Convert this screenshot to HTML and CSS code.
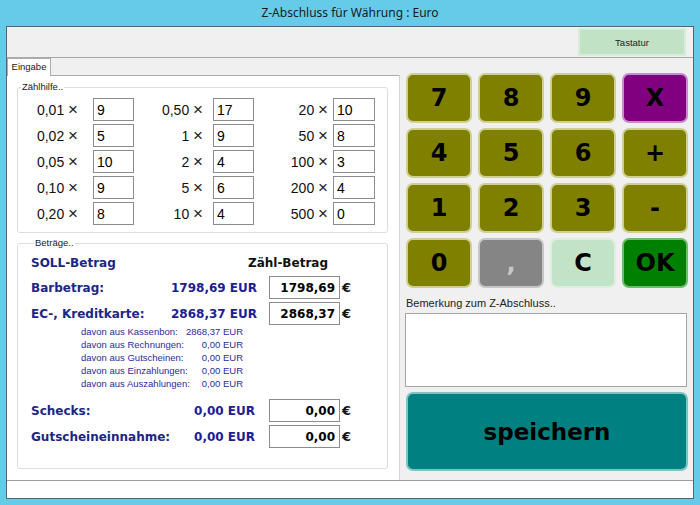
FILE: index.html
```html
<!DOCTYPE html>
<html lang="de">
<head>
<meta charset="utf-8">
<title>Z-Abschluss</title>
<link rel="stylesheet" href="styles.css">
</head>
<body>
<div class="window">
  <div class="titlebar">Z-Abschluss für Währung : Euro</div>
  <div class="client">
    <div class="topband"><button class="tastatur">Tastatur</button></div>
    <div class="main">
      <div class="tabs">
        <div class="tabstrip"><div class="tab">Eingabe</div></div>
        <div class="tabpage">
          <fieldset class="group count">
            <legend>Zählhilfe..</legend>
            <div class="countgrid">
              <span class="lbl l1">0,01 <span class="x">×</span></span><input class="cin" value="9">
              <span class="lbl l2">0,50 <span class="x">×</span></span><input class="cin" value="17">
              <span class="lbl l3">20 <span class="x">×</span></span><input class="cin" value="10">
              <span class="lbl l1">0,02 <span class="x">×</span></span><input class="cin" value="5">
              <span class="lbl l2">1 <span class="x">×</span></span><input class="cin" value="9">
              <span class="lbl l3">50 <span class="x">×</span></span><input class="cin" value="8">
              <span class="lbl l1">0,05 <span class="x">×</span></span><input class="cin" value="10">
              <span class="lbl l2">2 <span class="x">×</span></span><input class="cin" value="4">
              <span class="lbl l3">100 <span class="x">×</span></span><input class="cin" value="3">
              <span class="lbl l1">0,10 <span class="x">×</span></span><input class="cin" value="9">
              <span class="lbl l2">5 <span class="x">×</span></span><input class="cin" value="6">
              <span class="lbl l3">200 <span class="x">×</span></span><input class="cin" value="4">
              <span class="lbl l1">0,20 <span class="x">×</span></span><input class="cin" value="8">
              <span class="lbl l2">10 <span class="x">×</span></span><input class="cin" value="4">
              <span class="lbl l3">500 <span class="x">×</span></span><input class="cin" value="0">
            </div>
          </fieldset>
          <fieldset class="group amounts">
            <legend>Beträge..</legend>
            <div class="amt-head"><span class="soll">SOLL-Betrag</span><span class="zaehl">Zähl-Betrag</span></div>
            <div class="amt-row first"><span class="amt-lbl">Barbetrag:</span><span class="amt-val">1798,69 EUR</span><input class="ain" value="1798,69"><span class="eur">€</span></div>
            <div class="amt-row tight"><span class="amt-lbl">EC-, Kreditkarte:</span><span class="amt-val">2868,37 EUR</span><input class="ain" value="2868,37"><span class="eur">€</span></div>
            <div class="subs">
              <span>davon aus Kassenbon:</span><span class="sv">2868,37 EUR</span>
              <span>davon aus Rechnungen:</span><span class="sv">0,00 EUR</span>
              <span>davon aus Gutscheinen:</span><span class="sv">0,00 EUR</span>
              <span>davon aus Einzahlungen:</span><span class="sv">0,00 EUR</span>
              <span>davon aus Auszahlungen:</span><span class="sv">0,00 EUR</span>
            </div>
            <div class="amt-row gap"><span class="amt-lbl">Schecks:</span><span class="amt-val">0,00 EUR</span><input class="ain" value="0,00"><span class="eur">€</span></div>
            <div class="amt-row tight"><span class="amt-lbl">Gutscheineinnahme:</span><span class="amt-val">0,00 EUR</span><input class="ain" value="0,00"><span class="eur">€</span></div>
          </fieldset>
        </div>
      </div>
      <div class="side">
        <div class="keypad">
          <button class="key olive">7</button>
          <button class="key olive">8</button>
          <button class="key olive">9</button>
          <button class="key purple">X</button>
          <button class="key olive">4</button>
          <button class="key olive">5</button>
          <button class="key olive">6</button>
          <button class="key olive">+</button>
          <button class="key olive">1</button>
          <button class="key olive">2</button>
          <button class="key olive">3</button>
          <button class="key olive">-</button>
          <button class="key olive">0</button>
          <button class="key grey">,</button>
          <button class="key light">C</button>
          <button class="key green">OK</button>
        </div>
        <div class="remark-label">Bemerkung zum Z-Abschluss..</div>
        <textarea class="remark"></textarea>
        <button class="save">speichern</button>
      </div>
    </div>
    <div class="status"></div>
  </div>
</div>
</body>
</html>
```
FILE: styles.css
```css
html, body {
  margin: 0;
  padding: 0;
  background: #ffffff;
  font-family: "Liberation Sans", Arial, sans-serif;
}

.window {
  width: 700px;
  height: 505px;
  box-sizing: border-box;
  background: #66cbe9;
  padding: 0 6px 6px 6px;
  display: flex;
  flex-direction: column;
}

.titlebar {
  height: 26px;
  line-height: 26px;
  text-align: center;
  font-family: "Noto Sans", "Liberation Sans", sans-serif;
  font-size: 12px;
  color: #1a1a1a;
}

.client {
  height: 473px;
  box-sizing: border-box;
  border: 1px solid #52666e;
  background: #f0f0f0;
  display: flex;
  flex-direction: column;
}

.topband {
  height: 31px;
  box-sizing: border-box;
  border-bottom: 1px solid #a8a8a8;
  display: flex;
  justify-content: flex-end;
  align-items: flex-start;
  padding: 1px 7px 0 0;
}

.tastatur {
  width: 108px;
  height: 28px;
  box-sizing: border-box;
  background: #c2e2c6;
  border: 2px solid #d7ecd9;
  font-family: "Liberation Sans", Arial, sans-serif;
  font-size: 9.5px;
  color: #222;
  padding: 0;
}

.main {
  height: 422px;
  display: flex;
}

.tabs {
  width: 393px;
  display: flex;
  flex-direction: column;
}

.tabstrip {
  height: 17px;
  display: flex;
  align-items: flex-start;
}

.tab {
  height: 18px;
  width: 44px;
  box-sizing: border-box;
  background: #ffffff;
  border: 1px solid #acacac;
  border-bottom: none;
  font-size: 9.5px;
  line-height: 16px;
  text-align: center;
  color: #222;
  position: relative;
  z-index: 1;
}

.tabpage {
  flex: 1;
  background: #ffffff;
  border-top: 1px solid #acacac;
  border-right: 1px solid #d4d4d4;
}

.group {
  margin: 0 0 0 10px;
  width: 371px;
  box-sizing: border-box;
  border: 1px solid #d8dee3;
  border-radius: 3px;
  padding: 0;
  min-width: 0;
}

.group legend {
  padding: 0 1px;
  margin-left: 3px;
  font-size: 9.5px;
  line-height: 12px;
  color: #222;
}

.count {
  margin-top: 5px;
  padding-bottom: 7px;
}

.countgrid {
  margin: 5px 0 0 12px;
  display: grid;
  grid-template-columns: 63px 41px 79px 41px 79px 42px;
  grid-auto-rows: 23px;
  row-gap: 3px;
  align-items: center;
}

.lbl {
  text-align: right;
  font-size: 14px;
  color: #111;
  white-space: nowrap;
}

.lbl .x {
  font-size: 17px;
  line-height: 14px;
  color: #222;
}

.l1 { padding-right: 15px; }
.l2 { padding-right: 10px; }
.l3 { padding-right: 5px; }

.cin {
  height: 23px;
  width: 100%;
  box-sizing: border-box;
  border: 1px solid #8c8c8c;
  padding: 0 3px;
  margin: 0;
  font-family: "Liberation Sans", Arial, sans-serif;
  font-size: 14px;
  color: #000;
  background: #fff;
}

.amounts {
  margin-top: 4px;
  padding: 0 0 20px 13px;
}

.amt-head {
  margin-top: 5px;
  width: 297px;
  height: 18px;
  display: flex;
  justify-content: space-between;
  align-items: center;
  font-family: "DejaVu Sans", Verdana, sans-serif;
  font-weight: bold;
  font-size: 12px;
}

.soll { color: #1c2683; }
.zaehl { color: #111; }

.amt-row {
  display: grid;
  grid-template-columns: 140px 84px 71px auto;
  align-items: center;
  height: 23px;
  font-family: "DejaVu Sans", Verdana, sans-serif;
  font-weight: bold;
  font-size: 12px;
}

.amt-row.first { margin-top: 4px; }
.amt-row.tight { margin-top: 3px; }
.amt-row.gap { margin-top: 9px; }

.amt-lbl {
  color: #1c2683;
  white-space: nowrap;
}

.amt-val {
  text-align: right;
  color: #211c94;
  white-space: nowrap;
}

.ain {
  margin-left: 14px;
  width: 71px;
  height: 23px;
  box-sizing: border-box;
  border: 1px solid #8c8c8c;
  padding: 0 4px 0 0;
  text-align: right;
  font-family: "DejaVu Sans", Verdana, sans-serif;
  font-weight: bold;
  font-size: 12px;
  color: #000;
  background: #fff;
}

.eur {
  margin-left: 16px;
  font-size: 13px;
  color: #111;
}

.subs {
  margin-left: 50px;
  display: grid;
  grid-template-columns: 100px 62px;
  grid-auto-rows: 13px;
  line-height: 13px;
  font-size: 9.5px;
  color: #2b2b9c;
  white-space: nowrap;
}

.subs .sv { text-align: right; }

.side {
  flex: 1;
  padding: 15px 5px 0 6px;
}

.keypad {
  display: grid;
  grid-template-columns: repeat(4, 66px);
  grid-auto-rows: 50px;
  gap: 5px 6px;
}

.key {
  box-sizing: border-box;
  border-radius: 7px;
  border: 2px solid;
  padding: 0;
  font-family: "DejaVu Sans", Verdana, sans-serif;
  font-weight: bold;
  font-size: 24px;
  color: #000;
}

.olive { background: #808000; border-color: #cfcf93; }
.purple { background: #800080; border-color: #c98ac9; }
.grey { background: #858585; border-color: #c6c6c6; color: #c8c8c8; }
.light { background: #c3e3c9; border-color: #ddefdf; }
.green { background: #008000; border-color: #6dbd6d; }

.remark-label {
  margin-top: 8px;
  font-size: 11px;
  line-height: 14px;
  color: #222;
}

.remark {
  display: block;
  margin: 3px 0 0 -1px;
  width: 282px;
  height: 74px;
  box-sizing: border-box;
  border: 1px solid #a5a5a5;
  resize: none;
  background: #fff;
}

.save {
  display: block;
  margin-top: 5px;
  width: 282px;
  height: 79px;
  box-sizing: border-box;
  background: #008080;
  border: 2px solid #80c3c3;
  border-radius: 7px;
  font-family: "DejaVu Sans", Verdana, sans-serif;
  font-weight: bold;
  font-size: 23px;
  color: #000;
  padding: 0;
}

.status {
  height: 18px;
  box-sizing: border-box;
  border-top: 1px solid #9c9c9c;
  background: #ffffff;
}
```
